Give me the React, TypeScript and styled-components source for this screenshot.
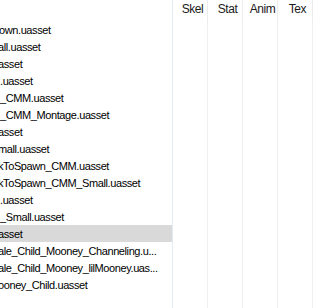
import React from "react";
import styled, { createGlobalStyle } from "styled-components";

const Global = createGlobalStyle`
  html, body { margin: 0; padding: 0; background: #ffffff; }
  body { font-family: "Liberation Sans", Arial, sans-serif; }
`;

const COLS = "173px 35px 35px 35px 35px 1fr";

const ListView = styled.div`
  width: 324px;
  height: 308px;
  overflow: hidden;
  background: #ffffff;
  display: flex;
  flex-direction: column;
  font-size: 11px;
  letter-spacing: -0.4px;
  color: #000000;
`;

const Header = styled.div`
  display: grid;
  grid-template-columns: ${COLS};
  height: 21px;
  flex: none;
`;

const HeaderCell = styled.div<{ $first?: boolean }>`
  height: 21px;
  line-height: 19px;
  padding-left: 5px;
  text-align: center;
  font-size: 12px;
  letter-spacing: -0.4px;
  color: #1a1a1a;
  border-right: 1px solid ${(p) => (p.$first ? "#e2eaf3" : "#ececec")};
  white-space: nowrap;
  overflow: hidden;
`;

const Body = styled.div`
  flex: 1;
  display: flex;
  flex-direction: column;
`;

const Row = styled.div`
  display: grid;
  grid-template-columns: ${COLS};
  height: 17px;
`;

const NameCell = styled.div<{ $selected?: boolean; $shift: number }>`
  height: 17px;
  line-height: 16px;
  padding-top: 1px;
  box-sizing: border-box;
  white-space: nowrap;
  overflow: hidden;
  text-indent: ${(p) => p.$shift}px;
  background: ${(p) => (p.$selected ? "#d9d9d9" : "transparent")};
  border-right: 1px solid #e2eaf3;
`;

const Cell = styled.div`
  height: 17px;
  border-right: 1px solid #efefef;
`;

const LastCell = styled.div`
  height: 17px;
`;

const Filler = styled.div`
  flex: 1;
  display: grid;
  grid-template-columns: ${COLS};
`;

type Item = { label: string; shift: number; selected?: boolean };

const items: Item[] = [
  { label: "own.uasset", shift: -1 },
  { label: "all.uasset", shift: -2 },
  { label: "asset", shift: -2 },
  { label: ".uasset", shift: 0 },
  { label: "_CMM.uasset", shift: 0 },
  { label: "_CMM_Montage.uasset", shift: 0 },
  { label: "asset", shift: -2 },
  { label: "mall.uasset", shift: -2 },
  { label: "kToSpawn_CMM.uasset", shift: -2 },
  { label: "kToSpawn_CMM_Small.uasset", shift: -2 },
  { label: ".uasset", shift: 0 },
  { label: "_Small.uasset", shift: 0 },
  { label: "asset", shift: -2, selected: true },
  { label: "ale_Child_Mooney_Channeling.u...", shift: -2 },
  { label: "ale_Child_Mooney_lilMooney.uas...", shift: -2 },
  { label: "ooney_Child.uasset", shift: -2 },
];

const headers = ["Skel", "Stat", "Anim", "Tex"];

export default function App() {
  return (
    <>
      <Global />
      <ListView>
        <Header>
          <HeaderCell $first />
          {headers.map((h) => (
            <HeaderCell key={h}>{h}</HeaderCell>
          ))}
          <LastCell />
        </Header>
        <Body>
          {items.map((it, i) => (
            <Row key={i}>
              <NameCell $selected={it.selected} $shift={it.shift}>
                {it.label}
              </NameCell>
              <Cell />
              <Cell />
              <Cell />
              <Cell />
              <LastCell />
            </Row>
          ))}
          <Filler>
            <NameCell $shift={0} />
            <Cell />
            <Cell />
            <Cell />
            <Cell />
            <LastCell />
          </Filler>
        </Body>
      </ListView>
    </>
  );
}
